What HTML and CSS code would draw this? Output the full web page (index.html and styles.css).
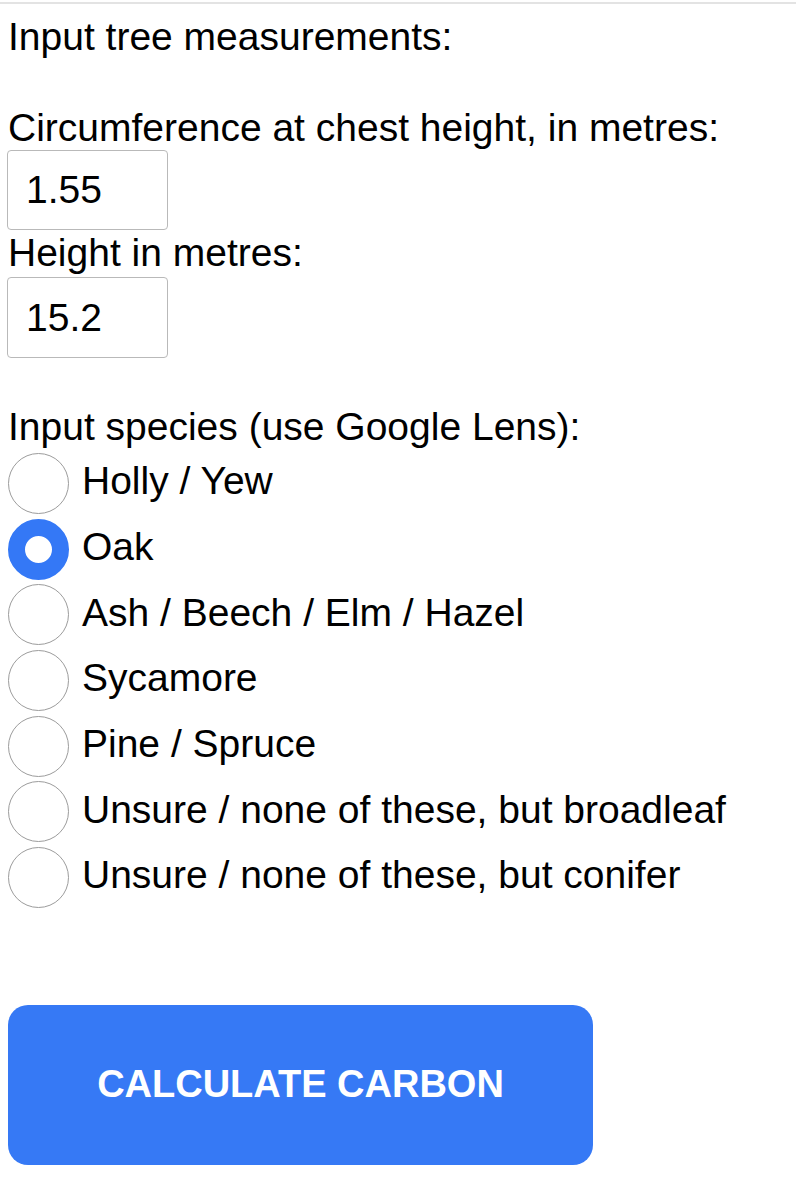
FILE: index.html
```html
<!DOCTYPE html>
<html lang="en">
<head>
<meta charset="utf-8">
<title>Tree carbon calculator</title>
<link rel="stylesheet" href="styles.css">
</head>
<body>
<div class="topline"></div>
<form class="calc">
  <p class="line">Input tree measurements:</p>
  <p class="line blank">&nbsp;</p>
  <label class="line" for="circ">Circumference at chest height, in metres:</label>
  <input class="field" id="circ" type="text" value="1.55">
  <label class="line" for="height">Height in metres:</label>
  <input class="field field2" id="height" type="text" value="15.2">
  <p class="line blank">&nbsp;</p>
  <p class="line">Input species (use Google Lens):</p>
  <div class="species">
    <label class="opt"><span class="radio"></span><span>Holly / Yew</span></label>
    <label class="opt"><span class="radio checked"></span><span>Oak</span></label>
    <label class="opt"><span class="radio"></span><span>Ash / Beech / Elm / Hazel</span></label>
    <label class="opt"><span class="radio"></span><span>Sycamore</span></label>
    <label class="opt"><span class="radio"></span><span>Pine / Spruce</span></label>
    <label class="opt"><span class="radio"></span><span>Unsure / none of these, but broadleaf</span></label>
    <label class="opt"><span class="radio"></span><span>Unsure / none of these, but conifer</span></label>
  </div>
  <button class="calc-btn" type="button">CALCULATE CARBON</button>
</form>
</body>
</html>
```

FILE: styles.css
```css
html, body {
  margin: 0;
  padding: 0;
  background: #ffffff;
}

body {
  font-family: "Liberation Sans", Arial, Helvetica, sans-serif;
  font-size: 39px;
  line-height: 45px;
  color: #000000;
}

.topline {
  height: 2px;
  margin-top: 2px;
  background: #e3e3e3;
}

.calc {
  display: flex;
  flex-direction: column;
  align-items: flex-start;
  padding: 10px 8px 0 8px;
}

.line {
  display: block;
  margin: 0;
  height: 45px;
  white-space: nowrap;
}

.blank {
  height: 46px;
}

.field {
  box-sizing: border-box;
  width: 161px;
  height: 80px;
  margin: 0 0 0 -1px;
  padding: 0 0 0 18px;
  border: 1px solid #b9b9b9;
  border-radius: 4px;
  font-family: inherit;
  font-size: 39px;
  color: #000000;
  background: #ffffff;
  outline: none;
}

.field2 {
  margin-top: 2px;
  height: 81px;
}

.species {
  display: flex;
  flex-direction: column;
}

.opt {
  display: flex;
  align-items: center;
  gap: 13px;
  height: 65.7px;
  white-space: nowrap;
}

.opt span:last-child {
  position: relative;
  top: -1px;
}

.radio {
  box-sizing: border-box;
  flex: none;
  width: 61px;
  height: 61px;
  margin-top: 4px;
  margin-bottom: 0.7px;
  align-self: flex-start;
  border: 1.5px solid #9c9c9c;
  border-radius: 50%;
  background: #ffffff;
}

.radio.checked {
  border: 17px solid #3478f6;
  background: #ffffff;
}

.calc-btn {
  margin-top: 96px;
  width: 585px;
  height: 160px;
  border: none;
  border-radius: 20px;
  background: #3679f5;
  color: #ffffff;
  font-family: "Liberation Sans", Arial, Helvetica, sans-serif;
  font-weight: bold;
  font-size: 38px;
  letter-spacing: 0;
  padding: 0;
}
```
